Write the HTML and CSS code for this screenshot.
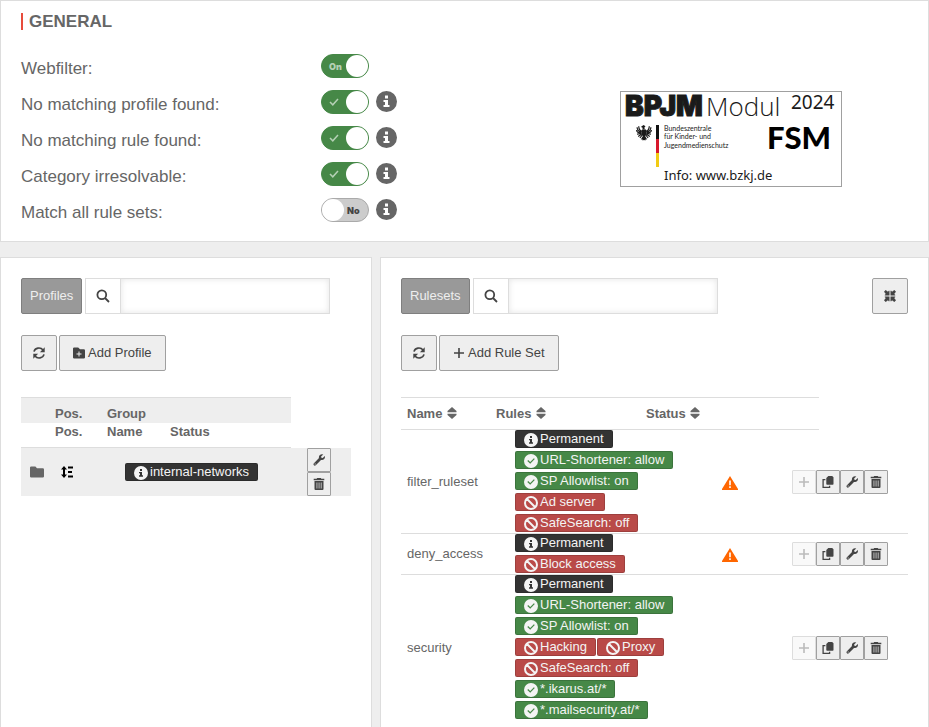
FILE: index.html
```html
<!DOCTYPE html>
<html lang="en">
<head>
    <meta charset="UTF-8">
    <meta name="viewport" content="width=device-width, initial-scale=1.0">
    <title>Webfilter</title>
    <link rel="stylesheet" href="styles.css">
</head>
<body>
    <!-- icon sprite -->
    <svg class="sprite" aria-hidden="true">
        <symbol id="i-info" viewBox="0 0 21 21">
            <path fill="currentColor" fill-rule="evenodd" d="M10.500 0a10.500 10.500 0 1 0 0 21a10.500 10.500 0 0 0 0-21zM9 4.500h3v3H9zM7.500 9H12v5h1.500v2h-6v-2H9v-3H7.500z"/>
        </symbol>
        <symbol id="i-check" viewBox="0 0 14 14">
            <path fill="currentColor" d="M7 0a7 7 0 1 0 0 14A7 7 0 0 0 7 0zM6.200 9.800L3.300 7l.9-.9 2 1.900 3.700-3.800.9.900z"/>
        </symbol>
        <symbol id="i-ban" viewBox="0 0 14 14">
            <path fill="none" stroke="currentColor" stroke-width="2" d="M7 1a6 6 0 1 0 0 12A6 6 0 0 0 7 1zM2.800 2.800l8.400 8.400"/>
        </symbol>
        <symbol id="i-search" viewBox="0 0 14 14">
            <path fill="none" stroke="currentColor" stroke-width="1.800" d="M5.800 1.400a4.400 4.400 0 1 0 0 8.800a4.400 4.400 0 0 0 0-8.800zM9 9l4 4"/>
        </symbol>
        <symbol id="i-refresh" viewBox="0 0 14 14">
            <path fill="none" stroke="currentColor" stroke-width="1.600" d="M2 5.600A5 4.600 0 0 1 11 4M12 8.400A5 4.600 0 0 1 3 10"/>
            <path fill="currentColor" d="M12.700 1.300v4.900H7.900zM1.300 12.700V7.800h4.800z"/>
        </symbol>
        <symbol id="i-folder" viewBox="0 0 14 12">
            <path fill="currentColor" d="M1.200.5h4.200L7 2.200h5.800q1.200 0 1.200 1.200v7q0 1.100-1.200 1.100H1.200Q0 11.500 0 10.400V1.600Q0 .5 1.200.5z"/>
        </symbol>
        <symbol id="i-folder-plus" viewBox="0 0 12 12">
            <path fill="currentColor" fill-rule="evenodd" d="M1.200.5h4L7 2.200h3.800q1.200 0 1.200 1.200v7q0 1.100-1.200 1.100H1.200Q0 11.500 0 10.400V1.600Q0 .5 1.200.5zM5.500 4.500v2h-2v1h2v2h1v-2h2v-1h-2v-2z"/>
        </symbol>
        <symbol id="i-plus" viewBox="0 0 12 12">
            <path fill="none" stroke="currentColor" stroke-width="1.600" d="M6 1v10M1 6h10"/>
        </symbol>
        <symbol id="i-sort" viewBox="0 0 10 12">
            <path fill="currentColor" d="M5 0l4.500 4v1.300h-9V4zM5 12L.5 8V6.700h9V8z"/>
        </symbol>
        <symbol id="i-warn" viewBox="0 0 16 14">
            <path fill="currentColor" fill-rule="evenodd" d="M8 0l8 13v1H0v-1zM7.200 4.500v4.700h1.600V4.500zM7.200 10.300v1.700h1.600v-1.700z"/>
        </symbol>
        <symbol id="i-copy" viewBox="0 0 12 12">
            <path fill="currentColor" d="M6.300 0h3.900l1.300 1.300V8q0 .8-.8.800H5.100q-.8 0-.8-.8V2z"/>
            <path fill="none" stroke="currentColor" stroke-width="1.300" d="M3.400 3.700H1.100v7.600H7.600V9.700"/>
        </symbol>
        <symbol id="i-wrench" viewBox="0 0 12 12">
            <path fill="currentColor" fill-rule="evenodd" d="M10.300.4L8.100 2.500l.3 1.300 1.300.3 2.100-2.200q.6 2.100-.8 3.400-1.300 1.100-3 .6L3 11.100q-.8.800-1.700.5-1.300-.7-.6-2.200L6 4.100Q5.500 2.300 6.900.9 8.300-.3 10.300.4zM1.700 9.500v.9h.9v-.9z"/>
        </symbol>
        <symbol id="i-trash" viewBox="0 0 12 12">
            <path fill="currentColor" fill-rule="evenodd" d="M4.200 0h3.600l.6.700H11.300v1.500H.7V.7h2.900zM1.500 2.900h9v8.100q0 1-.9 1H2.400q-.9 0-.9-1zM3.600 4.500v6h.7v-6zM5.700 4.500v6h.7v-6zM7.800 4.500v6h.7v-6z"/>
        </symbol>
        <symbol id="i-compress" viewBox="0 0 12 12">
            <path fill="currentColor" d="M5.500 5.500H.8V4.700L1.800 4 0 1.700 1.700 0 4 1.800l.7-1h.8zM6.500 5.500V.8h.8l.7 1L10.300 0 12 1.700 10.200 4l1 .7v.8zM5.500 6.500v4.700h-.8l-.7-1L1.700 12 0 10.300 1.800 8l-1-.7v-.8zM6.500 6.500h4.700v.8l-1 .7 1.800 2.300-1.700 1.700L8 10.200l-.7 1h-.8z"/>
        </symbol>
        <symbol id="i-order" viewBox="0 0 12 12">
            <path fill="currentColor" d="M3 0l3 3.400H4v5.200h2L3 12 0 8.600h2V3.400H0zM7 .6h5v2H7zM7 5h4v2H7zM7 9.400h5v2H7z"/>
        </symbol>
    </svg>

    <section class="panel general">
        <div class="settings">
            <h2>GENERAL</h2>
            <div class="setting">
                <label for="webfilter">Webfilter:</label>
                <span class="switch"><input type="checkbox" id="webfilter" checked><span class="switch-on">On</span><span class="knob"></span></span>
            </div>
            <div class="setting">
                <label for="no_profile">No matching profile found:</label>
                <span class="switch"><input type="checkbox" id="no_profile" checked><svg class="tick" viewBox="0 0 10 8"><path d="M1 4l2.800 2.800L9 1"/></svg><span class="knob"></span></span>
                <svg class="info"><use href="#i-info"/></svg>
            </div>
            <div class="setting">
                <label for="no_rule">No matching rule found:</label>
                <span class="switch"><input type="checkbox" id="no_rule" checked><svg class="tick" viewBox="0 0 10 8"><path d="M1 4l2.800 2.800L9 1"/></svg><span class="knob"></span></span>
                <svg class="info"><use href="#i-info"/></svg>
            </div>
            <div class="setting">
                <label for="irresolvable">Category irresolvable:</label>
                <span class="switch"><input type="checkbox" id="irresolvable" checked><svg class="tick" viewBox="0 0 10 8"><path d="M1 4l2.800 2.800L9 1"/></svg><span class="knob"></span></span>
                <svg class="info"><use href="#i-info"/></svg>
            </div>
            <div class="setting">
                <label for="match_all">Match all rule sets:</label>
                <span class="switch"><input type="checkbox" id="match_all"><span class="switch-off">No</span><span class="knob"></span></span>
                <svg class="info"><use href="#i-info"/></svg>
            </div>
        </div>

        <svg class="bpjm" viewBox="0 0 220 94">
            <text class="bpjm-black" x="4" y="24">BPJM</text>
            <text class="bpjm-light" x="85" y="24">Modul</text>
            <text class="bpjm-year" x="170" y="17">2024</text>
            <!-- federal eagle -->
            <g fill="#1a1a1a">
                <path d="M22.500 33l2 1.200-1 1 .2 2.300h-2l-.3-2-1.600-.6z"/>
                <path d="M21 37.500h4l.6 4-1.600 3.200h-2l-1.600-3.200z"/>
                <path d="M22 44h2l2.200 3.600-1.500-.3-.3 1.300-1.400-.7-1.400.7-.3-1.300-1.500.3z"/>
            </g>
            <g class="feathers">
                <path d="M21 39q-3-.2-3.300-4.800M20.700 40q-4.500-.4-4.600-4.800M20.500 41q-5 0-4.900-3M20.500 41.500l-4.500.6M20.800 42l-3.600 2.400M21.200 43l-2.300 3"/>
                <path d="M25 39q3-.2 3.300-4.800M25.300 40q4.500-.4 4.600-4.800M25.500 41q5 0 4.900-3M25.500 41.500l4.500.6M25.200 42l3.600 2.400M24.800 43l2.300 3"/>
            </g>
            <path fill="#111" d="M35 33h3v14h-3z"/>
            <path fill="#d8182c" d="M35 47h3v14h-3z"/>
            <path fill="#f2cb13" d="M35 61h3v14h-3z"/>
            <text class="bpjm-small" x="43" y="39">Bundeszentrale</text>
            <text class="bpjm-small" x="43" y="47">für Kinder- und</text>
            <text class="bpjm-small" x="43" y="56">Jugendmedienschutz</text>
            <text class="bpjm-fsm" x="146" y="57">FSM</text>
            <text class="bpjm-info" x="43" y="88">Info: www.bzkj.de</text>
        </svg>
    </section>

    <div class="columns">
        <section class="panel profiles">
            <div class="tools">
                <button class="btn tab">Profiles</button>
                <div class="search">
                    <button aria-label="Search profiles"><svg class="icon-lg"><use href="#i-search"/></svg></button>
                    <input type="text" aria-label="Profile filter">
                </div>
            </div>
            <div class="tools actions">
                <button class="btn square" aria-label="Reload profiles"><svg class="icon-lg"><use href="#i-refresh"/></svg></button>
                <button class="btn"><svg class="icon"><use href="#i-folder-plus"/></svg> Add Profile</button>
            </div>
            <table class="profile-table">
                <colgroup><col class="p-icon"><col class="p-pos"><col class="p-name"><col><col class="p-actions"></colgroup>
                <thead>
                    <tr class="group-row"><th></th><th>Pos.</th><th>Group</th><th></th><td></td></tr>
                    <tr class="name-row"><th></th><th>Pos.</th><th>Name</th><th>Status</th><td></td></tr>
                </thead>
                <tbody>
                    <tr>
                        <td class="folder"><svg class="icon-lg"><use href="#i-folder"/></svg></td>
                        <td class="order"><svg class="icon"><use href="#i-order"/></svg></td>
                        <td class="networks" colspan="2"><span class="badge dark"><svg><use href="#i-info"/></svg>internal-networks</span></td>
                        <td class="stack">
                            <button class="mini" aria-label="Edit"><svg class="icon"><use href="#i-wrench"/></svg></button>
                            <button class="mini" aria-label="Delete"><svg class="icon"><use href="#i-trash"/></svg></button>
                        </td>
                    </tr>
                </tbody>
            </table>
        </section>

        <section class="panel rulesets">
            <div class="tools">
                <button class="btn tab">Rulesets</button>
                <div class="search">
                    <button aria-label="Search rulesets"><svg class="icon-lg"><use href="#i-search"/></svg></button>
                    <input type="text" aria-label="Ruleset filter">
                </div>
                <button class="btn square compress" aria-label="Collapse"><svg class="icon"><use href="#i-compress"/></svg></button>
            </div>
            <div class="tools actions">
                <button class="btn square" aria-label="Reload rulesets"><svg class="icon-lg"><use href="#i-refresh"/></svg></button>
                <button class="btn"><svg class="icon"><use href="#i-plus"/></svg> Add Rule Set</button>
            </div>
            <table class="rule-table">
                <colgroup><col class="r-name"><col class="r-rules"><col class="r-extra"><col class="r-status"><col class="r-add"><col></colgroup>
                <thead>
                    <tr>
                        <th>Name <svg class="sort"><use href="#i-sort"/></svg></th>
                        <th>Rules <svg class="sort"><use href="#i-sort"/></svg></th>
                        <th colspan="3" class="status-head">Status <svg class="sort"><use href="#i-sort"/></svg></th>
                        <td></td>
                    </tr>
                </thead>
                <tbody>
                    <tr>
                        <td>filter_ruleset</td>
                        <td class="rules" colspan="2">
                            <div class="badges">
                                <span class="badge dark"><svg><use href="#i-info"/></svg>Permanent</span>
                                <span class="badge green"><svg><use href="#i-check"/></svg>URL-Shortener: allow</span>
                                <span class="badge green"><svg><use href="#i-check"/></svg>SP Allowlist: on</span>
                                <span class="badge red"><svg><use href="#i-ban"/></svg>Ad server</span>
                                <span class="badge red"><svg><use href="#i-ban"/></svg>SafeSearch: off</span>
                            </div>
                        </td>
                        <td class="status"><svg class="warn"><use href="#i-warn"/></svg></td>
                        <td colspan="2">
                            <div class="group">
                                <button class="mini" aria-label="Add" disabled><svg class="icon"><use href="#i-plus"/></svg></button>
                                <button class="mini" aria-label="Copy"><svg class="icon"><use href="#i-copy"/></svg></button>
                                <button class="mini" aria-label="Edit"><svg class="icon"><use href="#i-wrench"/></svg></button>
                                <button class="mini" aria-label="Delete"><svg class="icon"><use href="#i-trash"/></svg></button>
                            </div>
                        </td>
                    </tr>
                    <tr>
                        <td>deny_access</td>
                        <td class="rules" colspan="2">
                            <div class="badges">
                                <span class="badge dark"><svg><use href="#i-info"/></svg>Permanent</span>
                                <span class="badge red"><svg><use href="#i-ban"/></svg>Block access</span>
                            </div>
                        </td>
                        <td class="status"><svg class="warn"><use href="#i-warn"/></svg></td>
                        <td colspan="2">
                            <div class="group">
                                <button class="mini" aria-label="Add" disabled><svg class="icon"><use href="#i-plus"/></svg></button>
                                <button class="mini" aria-label="Copy"><svg class="icon"><use href="#i-copy"/></svg></button>
                                <button class="mini" aria-label="Edit"><svg class="icon"><use href="#i-wrench"/></svg></button>
                                <button class="mini" aria-label="Delete"><svg class="icon"><use href="#i-trash"/></svg></button>
                            </div>
                        </td>
                    </tr>
                    <tr>
                        <td>security</td>
                        <td class="rules" colspan="2">
                            <div class="badges">
                                <span class="badge dark"><svg><use href="#i-info"/></svg>Permanent</span>
                                <span class="badge green"><svg><use href="#i-check"/></svg>URL-Shortener: allow</span>
                                <span class="badge green"><svg><use href="#i-check"/></svg>SP Allowlist: on</span>
                                <span class="badge red"><svg><use href="#i-ban"/></svg>Hacking</span>
                                <span class="badge red"><svg><use href="#i-ban"/></svg>Proxy</span>
                                <span class="badge red"><svg><use href="#i-ban"/></svg>SafeSearch: off</span>
                                <span class="badge green"><svg><use href="#i-check"/></svg>*.ikarus.at/*</span>
                                <span class="badge green"><svg><use href="#i-check"/></svg>*.mailsecurity.at/*</span>
                            </div>
                        </td>
                        <td class="status"></td>
                        <td colspan="2">
                            <div class="group">
                                <button class="mini" aria-label="Add" disabled><svg class="icon"><use href="#i-plus"/></svg></button>
                                <button class="mini" aria-label="Copy"><svg class="icon"><use href="#i-copy"/></svg></button>
                                <button class="mini" aria-label="Edit"><svg class="icon"><use href="#i-wrench"/></svg></button>
                                <button class="mini" aria-label="Delete"><svg class="icon"><use href="#i-trash"/></svg></button>
                            </div>
                        </td>
                    </tr>
                </tbody>
            </table>
        </section>
    </div>
</body>
</html>
```
FILE: styles.css
```css
* {
    box-sizing: border-box;
}
body {
    margin: 0;
    min-height: 100vh;
    display: flex;
    flex-direction: column;
    gap: 15px;
    background-color: #eee;
    color: #666;
    font-family: "Liberation Sans", Arial, sans-serif;
    font-size: 13px;
    line-height: 16px;
}
button, input {
    font: inherit;
    color: #444;
    margin: 0;
}
svg {
    flex: none;
}
.sprite {
    position: absolute;
    width: 0;
    height: 0;
}
.panel {
    background: white;
    border: 1px solid #ddd;
    padding: 20px;
}

/* General settings */
.general {
    display: flex;
    padding: 12px 20px 13px;
}
.settings {
    width: 599px;
}
h2 {
    margin: 0 0 18px;
    padding-left: 6px;
    border-left: 2px solid #e74c3c;
    font-size: 17px;
    line-height: 17px;
}
.setting {
    display: flex;
    align-items: center;
    height: 36px;
    font-size: 17px;
}
.setting label {
    width: 300px;
    padding-top: 6px;
}
.switch {
    position: relative;
    width: 48px;
    height: 24px;
}
.switch input {
    appearance: none;
    display: block;
    width: 48px;
    height: 24px;
    border: 1px solid #aaa;
    border-radius: 12px;
    background: #ccc;
}
.switch input:checked {
    border-color: #468847;
    background: #468847;
}
.knob {
    position: absolute;
    top: 1px;
    left: 1px;
    width: 22px;
    height: 22px;
    border-radius: 50%;
    background: white;
    pointer-events: none;
}
.switch input:checked ~ .knob {
    left: 25px;
}
.switch-on, .switch-off {
    position: absolute;
    top: 5px;
    font: 900 9px/16px Inter, sans-serif;
    pointer-events: none;
}
.switch-on {
    left: 8px;
    color: #b5d0b5;
}
.switch-off {
    left: 26px;
    color: #444;
}
.tick {
    position: absolute;
    top: 8px;
    left: 8px;
    width: 10px;
    height: 8px;
    fill: none;
    stroke: #b5d0b5;
    stroke-width: 1.5;
    pointer-events: none;
}
.info {
    width: 21px;
    height: 21px;
    margin: 0 0 2px 7px;
}

/* BPJM logo */
.bpjm {
    width: 222px;
    height: 96px;
    margin-top: 78px;
    border: 1px solid #a0a0a0;
    fill: #1a1a1a;
    overflow: visible;
}
.bpjm-black {
    font: 900 28px Inter, sans-serif;
    stroke: #1a1a1a;
    stroke-width: 1;
}
.bpjm-light {
    font: 300 26px "Open Sans", sans-serif;
}
.bpjm-year {
    font: 19px "Noto Sans", sans-serif;
}
.bpjm-small {
    font: 7px "Liberation Sans Narrow", Lato, sans-serif;
}
.bpjm-fsm {
    font: 900 31px Lato, sans-serif;
    fill: #000;
}
.bpjm-info {
    font: 13px "Noto Sans", sans-serif;
}
.feathers {
    fill: none;
    stroke: #1a1a1a;
    stroke-width: 1.2;
}

/* Lower columns */
.columns {
    display: flex;
    flex: 1;
    gap: 8px;
}
.columns .panel {
    border-bottom: none;
    padding-bottom: 0;
}
.columns {
    display: grid;
    grid-template-columns: 372fr 549fr;
}
.tools {
    display: flex;
    gap: 3px;
}
.actions {
    gap: 2px;
    margin: 21px 0 26px;
}
.btn {
    display: flex;
    align-items: center;
    justify-content: center;
    gap: 3px;
    height: 36px;
    padding: 0 13px 1px;
    border: 1px solid #a0a0a0;
    border-radius: 2px;
    background: #eee;
}
.square {
    width: 36px;
    padding: 0;
}
.tab {
    padding: 0 8px 1px;
    border-color: #7f7f7f;
    background: #999;
    color: #eee;
}
.compress {
    margin-left: auto;
}
.search {
    display: flex;
    width: 245px;
    border: 1px solid #ddd;
}
.search button {
    display: flex;
    align-items: center;
    justify-content: center;
    width: 35px;
    padding: 0;
    border: none;
    border-right: 1px solid #ddd;
    background: white;
}
.search input {
    flex: 1;
    min-width: 0;
    border: none;
    box-shadow: inset 0 0 6px #e4e4e4;
}
.icon {
    width: 12px;
    height: 12px;
}
.icon-lg {
    width: 14px;
    height: 14px;
}

/* Tables */
table {
    width: 100%;
    table-layout: fixed;
    border-collapse: separate;
    border-spacing: 0;
}
th, td {
    padding: 0 6px;
    text-align: left;
}
td svg {
    display: block;
}
.p-icon { width: 28px; }
.p-pos { width: 52px; }
.p-name { width: 63px; }
.p-actions { width: 60px; }
.group-row th {
    height: 26px;
    padding-top: 7px;
    border-top: 1px solid #ddd;
    background: #eee;
}
.name-row th {
    height: 25px;
    padding-bottom: 6px;
    border-bottom: 1px solid #ddd;
}
.profile-table tbody td {
    background: #eee;
}
.profile-table .folder {
    padding-left: 9px;
}
.profile-table .order {
    padding-left: 12px;
    color: #000;
}
.profile-table .networks {
    padding-left: 24px;
}
.profile-table .stack {
    padding: 0 16px;
}
.r-name { width: 89px; }
.r-rules { width: 150px; }
.r-extra { width: 60px; }
.r-status { width: 86px; }
.r-add { width: 33px; }
.rule-table th {
    height: 33px;
    border-top: 1px solid #ddd;
    border-bottom: 1px solid #ddd;
}
.rule-table tbody td {
    border-bottom: 1px solid #ddd;
}
.rule-table tbody tr:last-child td {
    border-bottom: none;
}
.sort {
    width: 10px;
    height: 12px;
    margin-left: 1px;
    vertical-align: -1px;
}
.rule-table .rules {
    padding: 0 0 1px 25px;
}
.rule-table .status {
    padding: 2px 0 0 22px;
}
.badges {
    display: flex;
    flex-wrap: wrap;
    gap: 3px 1px;
}
.badge {
    display: inline-flex;
    align-items: center;
    gap: 2px;
    height: 18px;
    padding: 0 8px;
    border: 1px solid rgba(0, 0, 0, 0.15);
    border-radius: 2px;
    color: #f4f4f4;
    white-space: nowrap;
    vertical-align: middle;
}
.badge svg {
    width: 14px;
    height: 14px;
    margin-top: 2px;
}
.dark {
    background: #333;
}
.green {
    background: #468847;
}
.red {
    background: #b94a48;
}
.warn {
    width: 16px;
    height: 14px;
    color: #ff6600;
}
.group {
    display: flex;
}
.mini {
    display: flex;
    align-items: center;
    justify-content: center;
    width: 24px;
    height: 24px;
    padding: 0;
    border: 1px solid #a0a0a0;
    border-radius: 1px;
    background: #eee;
}
.mini:disabled {
    border-color: #ddd;
    background: #f9f9f9;
    color: #bbb;
}
```
